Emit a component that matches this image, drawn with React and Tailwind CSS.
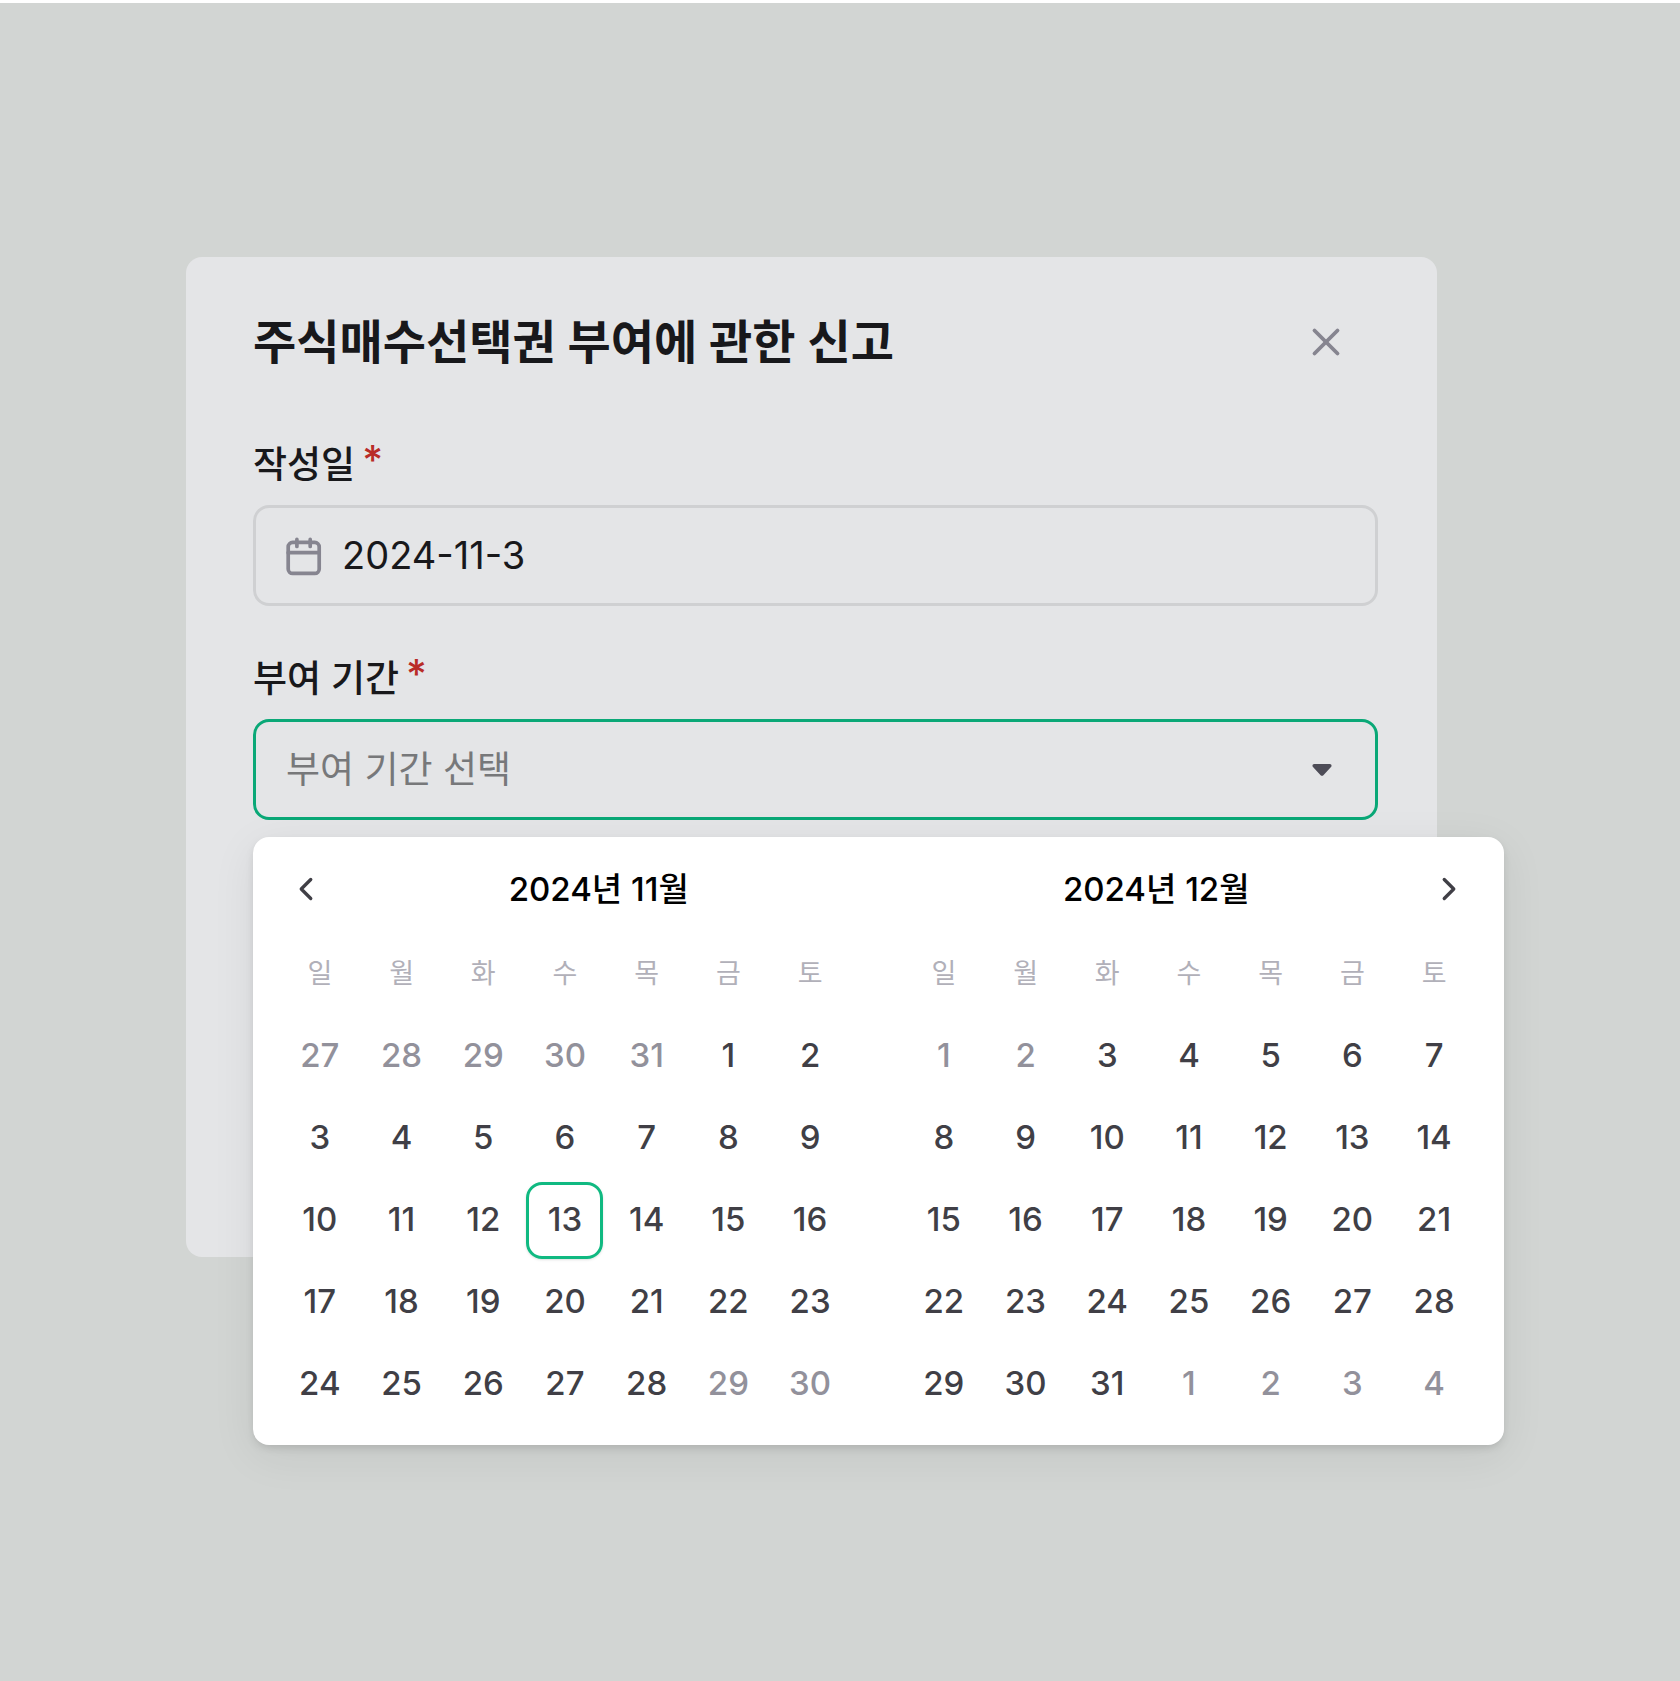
import { useState } from 'react';
import { X, ChevronLeft, ChevronRight } from 'lucide-react';

const WEEKDAYS = ['일', '월', '화', '수', '목', '금', '토'];

// muted: [first n cells, last n cells] that belong to a neighbouring month
const MONTHS = [
  {
    title: '2024년 11월',
    today: 13,
    weeks: [
      [27, 28, 29, 30, 31, 1, 2],
      [3, 4, 5, 6, 7, 8, 9],
      [10, 11, 12, 13, 14, 15, 16],
      [17, 18, 19, 20, 21, 22, 23],
      [24, 25, 26, 27, 28, 29, 30],
    ],
    muted: [5, 2],
  },
  {
    title: '2024년 12월',
    today: null,
    weeks: [
      [1, 2, 3, 4, 5, 6, 7],
      [8, 9, 10, 11, 12, 13, 14],
      [15, 16, 17, 18, 19, 20, 21],
      [22, 23, 24, 25, 26, 27, 28],
      [29, 30, 31, 1, 2, 3, 4],
    ],
    muted: [2, 4],
  },
];

const CalendarIcon = () => (
  <svg width="36" height="40" viewBox="0 0 36 40" fill="none" stroke="currentColor" strokeWidth="3.7" strokeLinecap="round" className="shrink-0 text-[#868590]" aria-hidden="true">
    <rect x="2.2" y="6.4" width="31" height="31" rx="4.5" />
    <path d="M2.2 16.7H33.2M10.9 3.4V10.4M24.2 3.4V10.4" />
  </svg>
);

const CaretIcon = () => (
  <svg width="20" height="12" viewBox="0 0 20 12" fill="currentColor" className="shrink-0 text-[#4d4c57]" aria-hidden="true">
    <path d="M2.2 0H17.8C19.4 0 20.1 1.9 19 3L11.4 11.2C10.6 12 9.4 12 8.6 11.2L1 3C-0.1 1.9 0.6 0 2.2 0Z" />
  </svg>
);

const FieldLabel = ({ htmlFor, children }) => (
  <label htmlFor={htmlFor} className="flex h-12 items-start gap-[7px] text-[37px] leading-[50px] font-medium text-[#18181b]">
    {children}
    <span className="text-[40px] leading-10 text-[#b92c28]">*</span>
  </label>
);

const Month = ({ month, selected, onSelect }) => {
  const isMuted = (idx) => idx < month.muted[0] || idx >= 35 - month.muted[1];

  return (
    <table className="flex-1 table-fixed border-collapse" aria-label={month.title}>
      <thead>
        <tr className="h-[82px]">
          {WEEKDAYS.map((day) => (
            <th key={day} className="p-0 text-[27px] font-normal text-[#b1b0b9]">{day}</th>
          ))}
        </tr>
      </thead>
      <tbody>
        {month.weeks.map((week, row) => (
          <tr key={row} className="h-[82px]">
            {week.map((day, col) => {
              const muted = isMuted(row * 7 + col);
              const active = !muted && day === selected;
              return (
                <td key={col} className="p-0">
                  <button
                    type="button"
                    onClick={() => onSelect(day)}
                    className={`mx-auto flex size-[77px] items-center justify-center rounded-2xl text-[33px] font-medium cursor-pointer ${
                      muted ? 'text-[#92919b]' : 'text-[#403f46]'
                    } ${active ? 'border-3 border-[#10b981] shadow-sm' : ''}`}
                  >
                    {day}
                  </button>
                </td>
              );
            })}
          </tr>
        ))}
      </tbody>
    </table>
  );
};

const RangePicker = () => {
  const [picked, setPicked] = useState({ month: 0, day: MONTHS[0].today });

  return (
    <div
      role="dialog"
      aria-label="부여 기간"
      className="absolute top-full left-0 -right-[126px] z-10 mt-[17px] rounded-2xl bg-white pt-7 pb-5 shadow-[0_4px_10px_-2px_rgba(0,0,0,0.15),0_10px_46px_0_rgba(0,0,0,0.07)]"
    >
      <div className="flex h-12 items-center pl-[39px] pr-[41px]">
        <button type="button" aria-label="이전 달" className="flex w-7 justify-center text-[#403f46] cursor-pointer">
          <ChevronLeft size={38} strokeWidth={2.1} className="shrink-0" />
        </button>
        {MONTHS.map((month) => (
          <h2 key={month.title} className="flex-1 text-center text-[33px] leading-[48px] font-medium text-black">{month.title}</h2>
        ))}
        <button type="button" aria-label="다음 달" className="flex w-7 justify-center text-[#403f46] cursor-pointer">
          <ChevronRight size={38} strokeWidth={2.1} className="shrink-0" />
        </button>
      </div>

      <div className="mt-5 flex gap-[52px] pl-[26px] pr-[29px]">
        {MONTHS.map((month, idx) => (
          <Month
            key={month.title}
            month={month}
            selected={picked.month === idx ? picked.day : null}
            onSelect={(day) => setPicked({ month: idx, day })}
          />
        ))}
      </div>
    </div>
  );
};

const App = () => {
  const [date, setDate] = useState('2024-11-3');
  const [open, setOpen] = useState(true);

  return (
    <div className="min-h-screen border-t-[3px] border-white bg-[#d2d5d3] pt-[254px] pl-[186px] pr-[243px] font-[Inter,'Noto_Sans_CJK_KR',sans-serif]">
      <main className="min-h-[1000px] rounded-2xl bg-[#e4e5e7] pt-[55px] pl-[67px] pr-[59px]">
        <header className="flex items-center justify-between pr-[29px]">
          <h1 className="text-[47px] leading-[60px] font-semibold text-[#18181b]">주식매수선택권 부여에 관한 신고</h1>
          <button type="button" aria-label="닫기" className="text-[#868590] cursor-pointer">
            <X size={46} strokeWidth={2} />
          </button>
        </header>

        <form className="mt-[68px] space-y-12">
          <div className="space-y-[17px]">
            <FieldLabel htmlFor="written-date">작성일</FieldLabel>
            <div className="flex h-[101px] items-center gap-5 rounded-2xl border-3 border-[#cfd0d2] px-[30px]">
              <CalendarIcon />
              <input
                id="written-date"
                type="text"
                value={date}
                onChange={(e) => setDate(e.target.value)}
                className="min-w-0 flex-1 bg-transparent text-[38px] text-[#18181b] outline-none"
              />
            </div>
          </div>

          <div className="space-y-[17px]">
            <FieldLabel htmlFor="grant-period">부여 기간</FieldLabel>
            <div className="relative">
              <button
                id="grant-period"
                type="button"
                aria-haspopup="dialog"
                aria-expanded={open}
                onClick={() => setOpen(!open)}
                className="flex h-[101px] w-full items-center justify-between rounded-2xl border-3 border-[#0aa877] pl-[30px] pr-[43px] text-[37px] text-[#77787a] cursor-pointer"
              >
                부여 기간 선택
                <CaretIcon />
              </button>
              {open && <RangePicker />}
            </div>
          </div>
        </form>
      </main>
    </div>
  );
};

export default App;
